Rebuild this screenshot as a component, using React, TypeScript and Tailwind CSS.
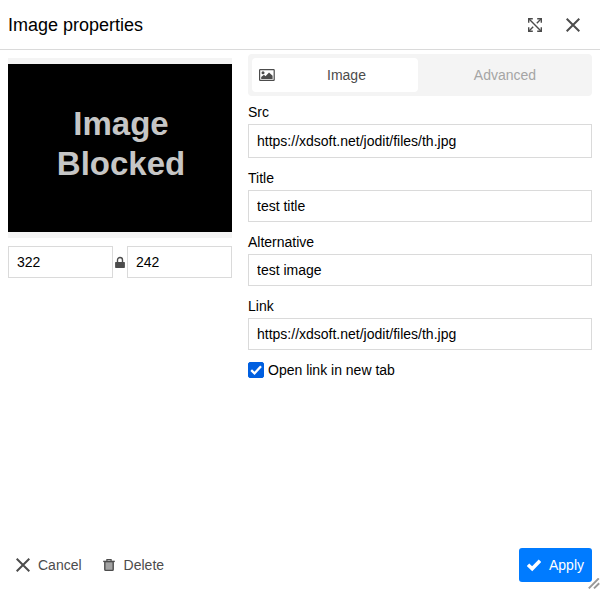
import React, { useState } from "react";

type IconProps = { className?: string };

const CloseIcon = ({ className = "" }: IconProps) => (
  <svg viewBox="0 0 14 14" className={`size-3.5 shrink-0 ${className}`} aria-hidden="true">
    <path d="M0.7 0.7 13.3 13.3M13.3 0.7 0.7 13.3" fill="none" stroke="currentColor" strokeWidth="2" />
  </svg>
);

const ExpandIcon = () => (
  <svg viewBox="0 0 14 14" className="size-3.5 shrink-0" fill="none" stroke="currentColor" strokeWidth="1.4" aria-hidden="true">
    <path d="M0.7 4.8V0.7H4.8M9.2 0.7H13.3V4.8M13.3 9.2V13.3H9.2M4.8 13.3H0.7V9.2" />
    <path d="M0.8 0.8 13.2 13.2M13.2 0.8 8.8 5.2M5.2 8.8 0.8 13.2" />
  </svg>
);

const PictureIcon = () => (
  <svg viewBox="0 0 16 12" className="h-3 w-4 shrink-0" aria-hidden="true">
    <rect x="0.6" y="0.6" width="14.6" height="10.8" rx="0.6" fill="none" stroke="currentColor" strokeWidth="1.2" />
    <circle cx="4" cy="3.7" r="1.5" fill="currentColor" />
    <path d="M2.2 10V8L5 5.8 6.5 7.2 10 3.4 13.6 6.8V10Z" fill="currentColor" />
  </svg>
);

const LockIcon = () => (
  <svg viewBox="0 0 10 12" className="h-3 w-2.5" aria-hidden="true">
    <path d="M2.5 6.5V4a2.5 2.5 0 0 1 5 0V6.5" fill="none" stroke="currentColor" strokeWidth="1.4" />
    <rect x="0.1" y="6" width="9.8" height="6" rx="0.7" fill="currentColor" />
  </svg>
);

const TrashIcon = () => (
  <svg viewBox="0 0 14 14" className="size-3.5 shrink-0" fill="none" stroke="currentColor" aria-hidden="true">
    <rect x="2.8" y="3.6" width="8.4" height="8.8" rx="0.8" fill="#a3a3a3" strokeWidth="1.4" />
    <path d="M1.2 3.4H12.8" strokeWidth="1.4" />
    <path d="M4.9 3V1.6H9.1V3" strokeWidth="1.2" />
  </svg>
);

const ApplyIcon = () => (
  <svg viewBox="0 0 14 14" className="size-3.5 shrink-0" aria-hidden="true">
    <path d="M1 6.8 5.2 10.8 13 2.8" fill="none" stroke="currentColor" strokeWidth="3.6" />
  </svg>
);

const inputStyle =
  "w-full min-w-0 rounded-none border border-[#dadada] bg-white px-2 text-sm text-black outline-none";

function Field({ id, label, value, tall = false }: { id: string; label: string; value: string; tall?: boolean }) {
  return (
    <div className="flex flex-col gap-1">
      <label htmlFor={id} className="leading-4">{label}</label>
      <input id={id} type="text" defaultValue={value} className={`${inputStyle} ${tall ? "h-[34px]" : "h-8"}`} />
    </div>
  );
}

export default function App() {
  const [tab, setTab] = useState("image");
  const [newTab, setNewTab] = useState(true);

  return (
    <div
      role="dialog"
      aria-labelledby="dialog-title"
      className="relative flex min-h-screen flex-col bg-white font-['Liberation_Sans',Arial,sans-serif] text-sm text-black"
    >
      <header className="flex h-[50px] items-center justify-between border-b border-[#dadada] pr-2.5 pl-2">
        <h1 id="dialog-title" className="text-lg">Image properties</h1>
        <div className="flex gap-1 text-[#4c4c4c]">
          <button type="button" aria-label="Full size" className="flex size-[34px] items-center justify-center">
            <ExpandIcon />
          </button>
          <button type="button" aria-label="Close" className="flex size-[34px] items-center justify-center">
            <CloseIcon />
          </button>
        </div>
      </header>

      <main className="grid flex-1 grid-cols-[2fr_3fr] items-start">
        <section className="flex flex-col gap-2 px-2 pt-2">
          <div className="bg-[#f4f4f4] py-1.5">
            <div
              role="img"
              aria-label="Image Blocked"
              className="flex aspect-4/3 flex-col items-center justify-center bg-black pb-2 pl-0.5 text-center text-[33px] leading-10 font-bold text-[#c6c6c6]"
            >
              <span>Image</span>
              <span>Blocked</span>
            </div>
          </div>
          <div className="flex items-center">
            <input type="text" aria-label="Width" defaultValue="322" className={`${inputStyle} h-8 flex-1`} />
            <button type="button" aria-label="Lock ratio" className="flex h-8 w-3.5 shrink-0 items-center justify-center text-[#4c4c4c]">
              <LockIcon />
            </button>
            <input type="text" aria-label="Height" defaultValue="242" className={`${inputStyle} h-8 flex-1`} />
          </div>
        </section>

        <section className="flex flex-col gap-2 px-2 pt-1">
          <div role="tablist" className="grid grid-cols-2 gap-1 rounded bg-[#f4f4f4] p-1">
            <button
              type="button"
              role="tab"
              aria-selected={tab === "image"}
              onClick={() => setTab("image")}
              className={`flex h-[34px] items-center rounded pl-[7px] ${tab === "image" ? "bg-white text-[#4c4c4c]" : "text-[#a5a5a5]"}`}
            >
              <PictureIcon />
              <span className="flex-1 text-center">Image</span>
            </button>
            <button
              type="button"
              role="tab"
              aria-selected={tab === "advanced"}
              onClick={() => setTab("advanced")}
              className={`flex h-[34px] items-center justify-center rounded px-2 ${tab === "advanced" ? "bg-white text-[#4c4c4c]" : "text-[#a5a5a5]"}`}
            >
              Advanced
            </button>
          </div>
          <div className="flex flex-col gap-3">
            <Field id="src" label="Src" value="https://xdsoft.net/jodit/files/th.jpg" tall />
            <Field id="title" label="Title" value="test title" />
            <Field id="alt" label="Alternative" value="test image" />
            <Field id="link" label="Link" value="https://xdsoft.net/jodit/files/th.jpg" />
            <label className="flex items-center gap-1 leading-4">
              <span className="grid size-4 shrink-0">
                <input
                  type="checkbox"
                  checked={newTab}
                  onChange={(e) => setNewTab(e.target.checked)}
                  className="col-start-1 row-start-1 size-4 appearance-none rounded-xs border border-[#767676] bg-white checked:border-[#005fe0] checked:bg-[#005fe0]"
                />
                {newTab && (
                  <svg viewBox="0 0 16 16" className="pointer-events-none col-start-1 row-start-1 size-4" aria-hidden="true">
                    <path d="M3.2 8.2 6.5 11.4 13 4.2" fill="none" stroke="white" strokeWidth="2.3" />
                  </svg>
                )}
              </span>
              Open link in new tab
            </label>
          </div>
        </section>
      </main>

      <footer className="flex items-center justify-between p-2 text-[#4c4c4c]">
        <div className="flex gap-1">
          <button type="button" className="flex h-[34px] items-center gap-2 rounded px-2">
            <CloseIcon />
            Cancel
          </button>
          <button type="button" className="flex h-[34px] items-center gap-2 rounded px-2">
            <TrashIcon />
            Delete
          </button>
        </div>
        <button type="button" className="flex h-[34px] items-center gap-2 rounded-[3px] bg-[#007bff] px-2 text-white">
          <ApplyIcon />
          Apply
        </button>
      </footer>

      <svg viewBox="0 0 12 12" className="absolute right-0 bottom-0 size-3 cursor-se-resize" aria-hidden="true">
        <path d="M0.8 10.4 10.8 0.4M6 10.4 11.2 5.2" stroke="#999999" strokeWidth="2" />
      </svg>
    </div>
  );
}
